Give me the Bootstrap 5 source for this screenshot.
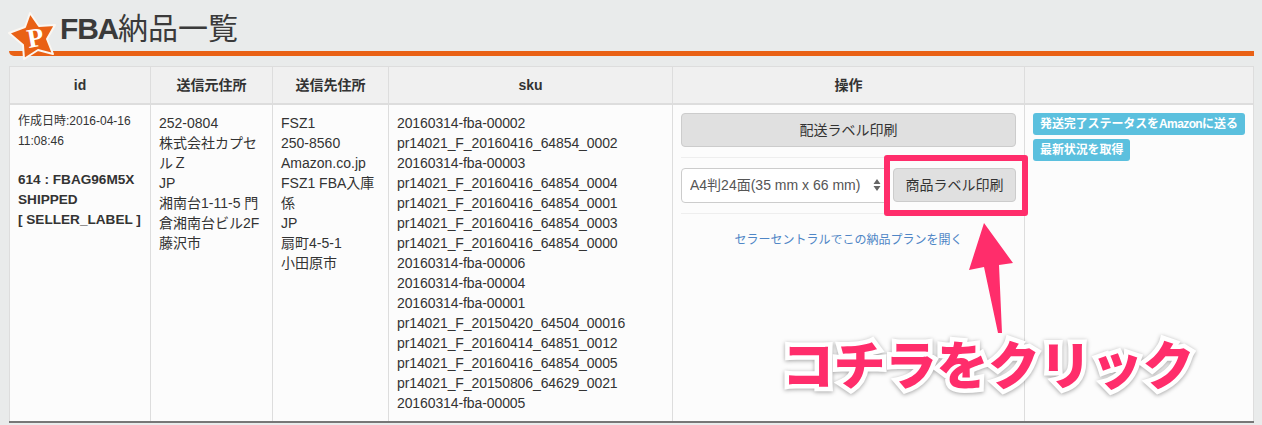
<!DOCTYPE html>
<html lang="ja">
<head>
<meta charset="utf-8">
<title>FBA納品一覧</title>
<link href="https://cdn.jsdelivr.net/npm/bootstrap@5.3.0/dist/css/bootstrap.min.css" rel="stylesheet">
<style>
html,body{height:425px;overflow:hidden}
body{background:#e9ebeb;color:#333;font-family:"Liberation Sans","Noto Sans CJK JP",sans-serif;font-size:14px;line-height:20px;position:relative}
.page-wrap{padding:0 8px 0 9px}
.title-bar{height:56px;border-bottom:5px solid #e96115;border-bottom-left-radius:5px;display:flex;align-items:flex-end;padding-left:51px;margin-bottom:10px}
.title-bar h1{font-family:inherit;font-size:30px;line-height:36px;margin:0 0 4px;color:#3a3a3a;font-weight:400}
.title-bar h1 b{font-weight:700;letter-spacing:-1.2px}
.logo-star{position:absolute;left:0;top:0;width:60px;height:62px}
.logo-p{font-family:"Liberation Serif",serif;font-weight:700;font-size:27px;fill:#fff}
.fba-table{table-layout:fixed;width:1244px;margin:0;border-collapse:collapse;--bs-table-bg:transparent;color:#333}
.fba-table th,.fba-table td{border:1px solid #ddd;padding:8px;font-size:14px;line-height:20px;vertical-align:top}
.fba-table thead th{background:#f0f0f0;text-align:center;height:37px;border-bottom:2px solid #ddd;font-weight:700}
.fba-table tbody td{background:#fcfcfc;height:317px;border-bottom:2px solid #777}
.w-a{width:141px}.w-b{width:122px}.w-c{width:116px}.w-d{width:284px}.w-e{width:352px}.w-f{width:229px}
.sku-list{letter-spacing:-.1px}
.made-at{font-size:12px;display:block;margin-top:-2px;margin-bottom:19px}
.order-id{font-size:13.6px;font-weight:700;display:block;white-space:nowrap}
.btn-gray{background:#e0e0e0;border:1px solid #ccc;color:#333;font-size:14px;line-height:20px;height:34px;padding:6px 12px;border-radius:4px}
.rule{height:1px;background:#eee;margin:10px 0}
.print-select{height:34.5px;font-size:14px;line-height:20px;padding:6px 8px;border:1px solid #ccc;border-radius:4px;width:207px;background-color:#fff;color:#555;
  background-image:url("data:image/svg+xml,%3csvg xmlns='http://www.w3.org/2000/svg' viewBox='0 0 8 12'%3e%3cpath fill='%23666' d='M4 0l3.5 5h-7zM4 12L.5 7h7z'/%3e%3c/svg%3e");background-position:right 6px center;background-size:8px 12px}
.label-print{width:123px;flex:none;padding:6px 4px}
.plan-row{padding-top:5px}
.plan-link{color:#4f86c6;font-size:12px;text-decoration:none}
.act-chip{background:#5bc0de;color:#fff;font-size:12px;font-weight:700;line-height:14px;padding:4px 7px;border-radius:3px;display:inline-block;white-space:nowrap;text-decoration:none;letter-spacing:-.1px}
.tight-latin{letter-spacing:-.6px}
.red-frame{position:absolute;left:884px;top:155px;width:144px;height:61px;border:6px solid #ff2d6b;border-radius:3px}
.up-arrow{position:absolute;left:960px;top:215px;width:60px;height:125px}
.click-note{position:absolute;left:782px;top:326px;font-family:"Noto Sans CJK JP",sans-serif;font-weight:900;font-size:52px;line-height:74px;letter-spacing:-.5px;color:#ff2d6b;-webkit-text-stroke:9px #fff;paint-order:stroke fill;filter:drop-shadow(0 1px 2px rgba(0,0,0,.35));white-space:nowrap}
</style>
</head>
<body>
<div class="page-wrap">
  <div class="title-bar"><h1><b>FBA</b>納品一覧</h1></div>
  <table class="table fba-table">
    <colgroup><col class="w-a"><col class="w-b"><col class="w-c"><col class="w-d"><col class="w-e"><col class="w-f"></colgroup>
    <thead>
      <tr><th>id</th><th>送信元住所</th><th>送信先住所</th><th>sku</th><th>操作</th><th></th></tr>
    </thead>
    <tbody>
      <tr>
        <td>
          <span class="made-at">作成日時:2016-04-16 11:08:46</span>
          <span class="order-id">614 : FBAG96M5X</span>
          <span class="order-id">SHIPPED</span>
          <span class="order-id">[ SELLER_LABEL ]</span>
        </td>
        <td>252-0804<br>株式会社カプセルＺ<br>JP<br>湘南台1-11-5 門倉湘南台ビル2F<br>藤沢市</td>
        <td>FSZ1<br>250-8560<br>Amazon.co.jp<br>FSZ1 FBA入庫係<br>JP<br>扇町4-5-1<br>小田原市</td>
        <td class="sku-list">20160314-fba-00002<br>pr14021_F_20160416_64854_0002<br>20160314-fba-00003<br>pr14021_F_20160416_64854_0004<br>pr14021_F_20160416_64854_0001<br>pr14021_F_20160416_64854_0003<br>pr14021_F_20160416_64854_0000<br>20160314-fba-00006<br>20160314-fba-00004<br>20160314-fba-00001<br>pr14021_F_20150420_64504_00016<br>pr14021_F_20160414_64851_0012<br>pr14021_F_20160416_64854_0005<br>pr14021_F_20150806_64629_0021<br>20160314-fba-00005</td>
        <td>
          <button type="button" class="btn btn-gray w-100 d-block">配送ラベル印刷</button>
          <div class="rule"></div>
          <div class="d-flex justify-content-between">
            <select class="form-select print-select"><option>A4判24面(35 mm x 66 mm)</option></select>
            <button type="button" class="btn btn-gray label-print">商品ラベル印刷</button>
          </div>
          <div class="rule"></div>
          <div class="text-center plan-row"><a href="#" class="plan-link">セラーセントラルでこの納品プランを開く</a></div>
        </td>
        <td>
          <div class="d-flex flex-column align-items-start gap-1">
            <a href="#" class="act-chip">発送完了ステータスを<span class="tight-latin">Amazon</span>に送る</a>
            <a href="#" class="act-chip">最新状況を取得</a>
          </div>
        </td>
      </tr>
    </tbody>
  </table>
</div>
<svg class="logo-star" viewBox="0 0 60 62" aria-hidden="true">
  <path d="M30 13 L39 26 L55 25 L47 39 L53 54 L38 50 L24 59 L23 45 L9 33 L25 27 Z" fill="#e96115" stroke="#fbf7f2" stroke-width="2" stroke-linejoin="round"/>
  <text class="logo-p" x="27" y="47" transform="rotate(-10 34 37)">P</text>
</svg>
<div class="red-frame"></div>
<svg class="up-arrow" viewBox="960 215 60 125" aria-hidden="true">
  <path d="M984 223 L1013 263 L999 265 L1002 333 L998 333 L984 267 L969 270 Z" fill="#ff2d6b"/>
</svg>
<div class="click-note">コチラをクリック</div>
<script src="https://cdn.jsdelivr.net/npm/bootstrap@5.3.0/dist/js/bootstrap.bundle.min.js"></script>
</body>
</html>
